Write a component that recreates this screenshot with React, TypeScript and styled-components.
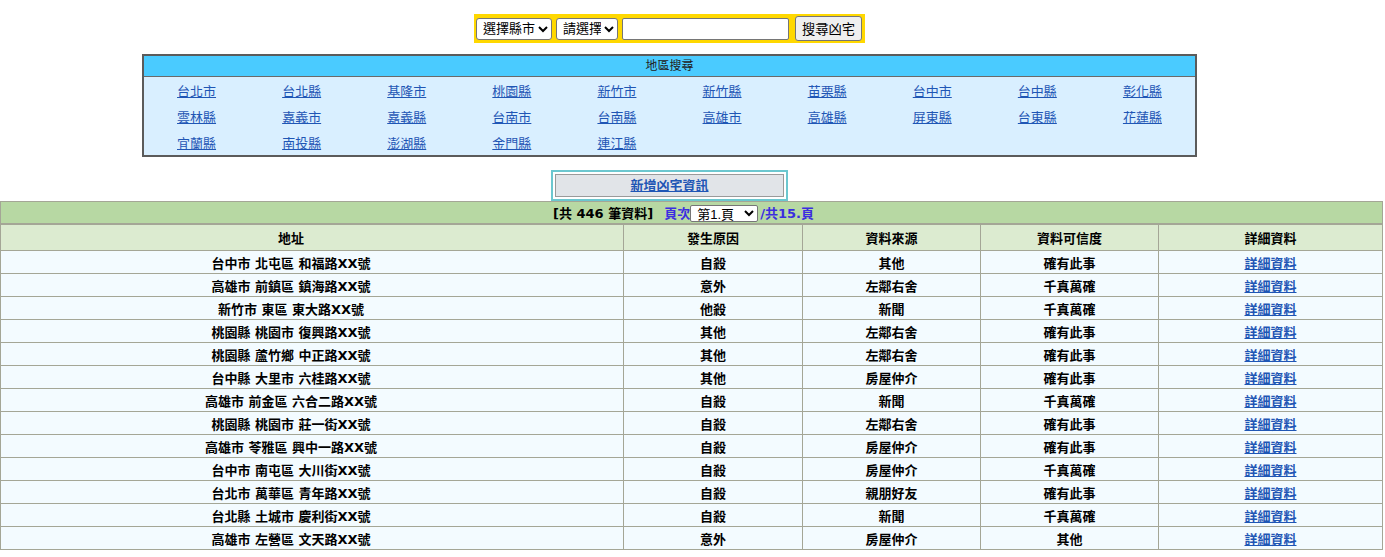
import React from "react";
import styled, { createGlobalStyle } from "styled-components";

const Global = createGlobalStyle`
  html, body { margin: 0; padding: 0; background: #fff; overflow: hidden; }
  body { font-family: "DejaVu Sans", "Noto Sans CJK TC", sans-serif; font-size: 13px; color: #000; }
`;

const Page = styled.div`
  width: 1382px;
  padding-top: 14px;
`;

const Top = styled.div`
  width: 1339px;
  display: flex;
  flex-direction: column;
  align-items: center;
`;

const SearchForm = styled.form`
  display: flex;
  align-items: center;
  gap: 4px;
  background: #ffd800;
  padding: 2px 3px 2px 2px;
  height: 25px;
  margin: 0;
`;

const SearchSelect = styled.select<{ $w: number }>`
  width: ${(p) => p.$w}px;
  height: 22px;
  font: 13px "Liberation Sans", "Noto Sans CJK TC", sans-serif;
  border: 1px solid #767676;
  border-radius: 3px;
  background: #fff;
  color: #000;
  padding: 0 0 0 2px;
`;

const SearchInput = styled.input`
  width: 161px;
  height: 18px;
  border: 1px solid #767676;
  border-radius: 2px;
  padding: 1px 2px;
  font: 13px "Liberation Sans", "Noto Sans CJK TC", sans-serif;
  margin-right: 2px;
`;

const SearchButton = styled.button`
  width: 67px;
  height: 25px;
  font: 13.3px "Liberation Sans", "Noto Sans CJK TC", sans-serif;
  background: #efefef;
  border: 1px solid #767676;
  border-radius: 3px;
  color: #000;
  padding: 0;
`;

const RegionBox = styled.div`
  margin-top: 11px;
  width: 1051px;
  border: 2px solid #5b5b5b;
  background: #d9efff;
`;

const RegionHeader = styled.div`
  height: 20px;
  line-height: 20px;
  background: #4acbff;
  border-bottom: 1px solid #6a6a6a;
  text-align: center;
  font-size: 12px;
  color: #222;
`;

const RegionGrid = styled.div`
  display: grid;
  grid-template-columns: repeat(10, 1fr);
  grid-auto-rows: 26px;
`;

const RegionCell = styled.div`
  display: flex;
  align-items: center;
  justify-content: center;
`;

const RegionLink = styled.a`
  color: #1f56b5;
  text-decoration: underline;
  font-size: 13px;
  cursor: pointer;
`;

const AddWrap = styled.div`
  margin-top: 13px;
  width: 229px;
  padding: 2px;
  border: 2px solid #6cc7cf;
  background: #fff;
`;

const AddButton = styled.div`
  height: 21px;
  line-height: 21px;
  text-align: center;
  background: #e1e4e8;
  border: 1px solid #9a9a9a;
`;

const AddLink = styled.a`
  color: #1f56b5;
  font-weight: bold;
  text-decoration: underline;
  cursor: pointer;
`;

const ListTable = styled.table`
  width: 1382px;
  border-collapse: collapse;
  margin-top: 0;
  font-weight: bold;
  table-layout: fixed;
`;

const PagerCell = styled.td`
  background: #b7d8a3;
  border: 1px solid #a4a696;
  border-bottom-width: 2px;
  height: 21px;
  padding: 0 16px 0 0;
  text-align: center;
  font-weight: bold;
  font-size: 13px;
  white-space: nowrap;
`;

const Blue = styled.span`
  color: #3b2de0;
  margin-left: 2px;
`;

const PageSelect = styled.select`
  width: 68px;
  height: 17px;
  font: 13px "Liberation Sans", "Noto Sans CJK TC", sans-serif;
  border: 1px solid #767676;
  border-radius: 2px;
  background: #fff;
  padding: 0 0 0 2px;
  vertical-align: middle;
  margin: -2px 0 0;
`;

const HeadCell = styled.th<{ $first?: boolean }>`
  background: #dcebd0;
  border: 1px solid #a4a696;
  height: 25px;
  padding: 0 ${(p) => (p.$first ? "42px" : "0")} 0 0;
  font-size: 13px;
  font-weight: bold;
  text-align: center;
`;

const Cell = styled.td<{ $first?: boolean }>`
  background: #f3fbff;
  border: 1px solid #a4a696;
  height: 22px;
  padding: 0 ${(p) => (p.$first ? "42px" : "0")} 0 0;
  text-align: center;
  font-size: 13px;
  white-space: nowrap;
`;

const DetailLink = styled.a`
  color: #1f56b5;
  text-decoration: underline;
  cursor: pointer;
`;

const regions = [
  "台北市", "台北縣", "基隆市", "桃園縣", "新竹市", "新竹縣", "苗栗縣", "台中市", "台中縣", "彰化縣",
  "雲林縣", "嘉義市", "嘉義縣", "台南市", "台南縣", "高雄市", "高雄縣", "屏東縣", "台東縣", "花蓮縣",
  "宜蘭縣", "南投縣", "澎湖縣", "金門縣", "連江縣",
];

const colWidths = [623, 179, 178, 178, 224];

const rows: [string, string, string, string][] = [
  ["台中市 北屯區 和福路XX號", "自殺", "其他", "確有此事"],
  ["高雄市 前鎮區 鎮海路XX號", "意外", "左鄰右舍", "千真萬確"],
  ["新竹市 東區 東大路XX號", "他殺", "新聞", "千真萬確"],
  ["桃園縣 桃園市 復興路XX號", "其他", "左鄰右舍", "確有此事"],
  ["桃園縣 蘆竹鄉 中正路XX號", "其他", "左鄰右舍", "確有此事"],
  ["台中縣 大里市 六桂路XX號", "其他", "房屋仲介", "確有此事"],
  ["高雄市 前金區 六合二路XX號", "自殺", "新聞", "千真萬確"],
  ["桃園縣 桃園市 莊一街XX號", "自殺", "左鄰右舍", "確有此事"],
  ["高雄市 苓雅區 興中一路XX號", "自殺", "房屋仲介", "確有此事"],
  ["台中市 南屯區 大川街XX號", "自殺", "房屋仲介", "千真萬確"],
  ["台北市 萬華區 青年路XX號", "自殺", "親朋好友", "確有此事"],
  ["台北縣 土城市 慶利街XX號", "自殺", "新聞", "千真萬確"],
  ["高雄市 左營區 文天路XX號", "意外", "房屋仲介", "其他"],
];

export default function App() {
  return (
    <Page>
      <Global />
      <Top>
        <SearchForm onSubmit={(e) => e.preventDefault()}>
          <SearchSelect $w={76} defaultValue="">
            <option value="">選擇縣市</option>
          </SearchSelect>
          <SearchSelect $w={62} defaultValue="">
            <option value="">請選擇</option>
          </SearchSelect>
          <SearchInput type="text" />
          <SearchButton type="submit">搜尋凶宅</SearchButton>
        </SearchForm>

        <RegionBox>
          <RegionHeader>地區搜尋</RegionHeader>
          <RegionGrid>
            {regions.map((r) => (
              <RegionCell key={r}>
                <RegionLink>{r}</RegionLink>
              </RegionCell>
            ))}
          </RegionGrid>
        </RegionBox>

        <AddWrap>
          <AddButton>
            <AddLink>新增凶宅資訊</AddLink>
          </AddButton>
        </AddWrap>
      </Top>

      <ListTable>
        <colgroup>
          {colWidths.map((w, i) => (
            <col key={i} style={{ width: w }} />
          ))}
        </colgroup>
        <thead>
          <tr>
            <PagerCell colSpan={5}>
              [共 446 筆資料]&nbsp; <Blue>頁次</Blue>
              <PageSelect defaultValue="1">
                <option value="1">第1.頁</option>
              </PageSelect>
              <Blue>/共15.頁</Blue>
            </PagerCell>
          </tr>
          <tr>
            <HeadCell $first>地址</HeadCell>
            <HeadCell>發生原因</HeadCell>
            <HeadCell>資料來源</HeadCell>
            <HeadCell>資料可信度</HeadCell>
            <HeadCell>詳細資料</HeadCell>
          </tr>
        </thead>
        <tbody>
          {rows.map((r, i) => (
            <tr key={i}>
              <Cell $first>{r[0]}</Cell>
              <Cell>{r[1]}</Cell>
              <Cell>{r[2]}</Cell>
              <Cell>{r[3]}</Cell>
              <Cell>
                <DetailLink>詳細資料</DetailLink>
              </Cell>
            </tr>
          ))}
        </tbody>
      </ListTable>
    </Page>
  );
}
